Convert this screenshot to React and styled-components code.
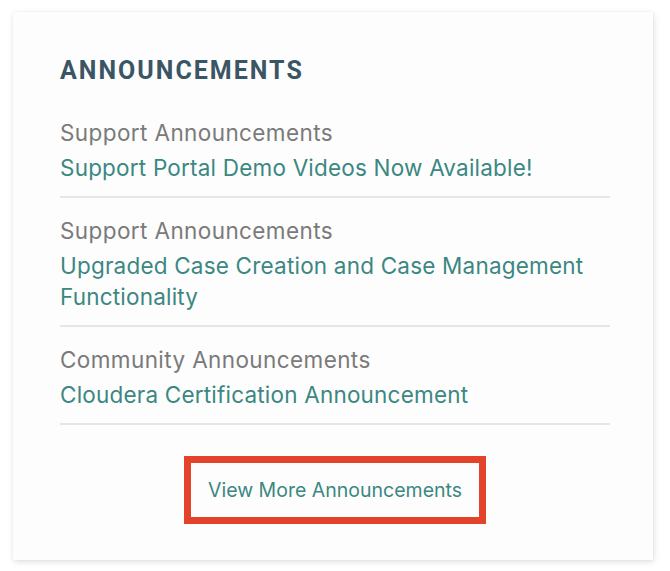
import React from 'react'
import styled, { createGlobalStyle } from 'styled-components'

const Global = createGlobalStyle`
  body {
    margin: 0;
    background: #fff;
    font-family: Inter, "Liberation Sans", sans-serif;
  }
`

const Card = styled.section`
  margin: 12px 17px 13px 13px;
  background: #fdfdfd;
  box-shadow: 1px 2px 6px rgba(0, 0, 0, 0.12), 0 0 2px rgba(0, 0, 0, 0.06);
  padding: 43px 43px 36px 47px;
`

const Heading = styled.h2`
  margin: 0 0 31px;
  font-family: Roboto, "Liberation Sans", sans-serif;
  font-size: 25px;
  line-height: 31px;
  font-weight: 700;
  letter-spacing: 2px;
  color: #3a5563;
`

const Item = styled.div`
  padding: 17px 0 13px;
  border-bottom: 2px solid #e6e6e6;
  &:first-of-type {
    padding-top: 0;
  }
`

const Category = styled.div`
  font-size: 22.5px;
  line-height: 31px;
  letter-spacing: 0.4px;
  color: #7a7a7a;
  margin-bottom: 4px;
`

const Title = styled.a`
  display: block;
  font-size: 22.5px;
  line-height: 31px;
  letter-spacing: 0.2px;
  color: #3b8782;
  text-decoration: none;
`

const Footer = styled.div`
  display: flex;
  justify-content: center;
  padding-top: 31px;
`

const MoreButton = styled.a`
  display: block;
  border: 7px solid #e2432a;
  padding: 15px 17px;
  font-size: 19.5px;
  line-height: 24px;
  color: #3b8782;
  text-decoration: none;
`

const items = [
  { category: 'Support Announcements', title: 'Support Portal Demo Videos Now Available!' },
  { category: 'Support Announcements', title: 'Upgraded Case Creation and Case Management Functionality' },
  { category: 'Community Announcements', title: 'Cloudera Certification Announcement' },
]

export default function App() {
  return (
    <>
      <Global />
      <Card>
        <Heading>ANNOUNCEMENTS</Heading>
        {items.map((item, i) => (
          <Item key={i}>
            <Category>{item.category}</Category>
            <Title href="#">{item.title}</Title>
          </Item>
        ))}
        <Footer>
          <MoreButton href="#">View More Announcements</MoreButton>
        </Footer>
      </Card>
    </>
  )
}
